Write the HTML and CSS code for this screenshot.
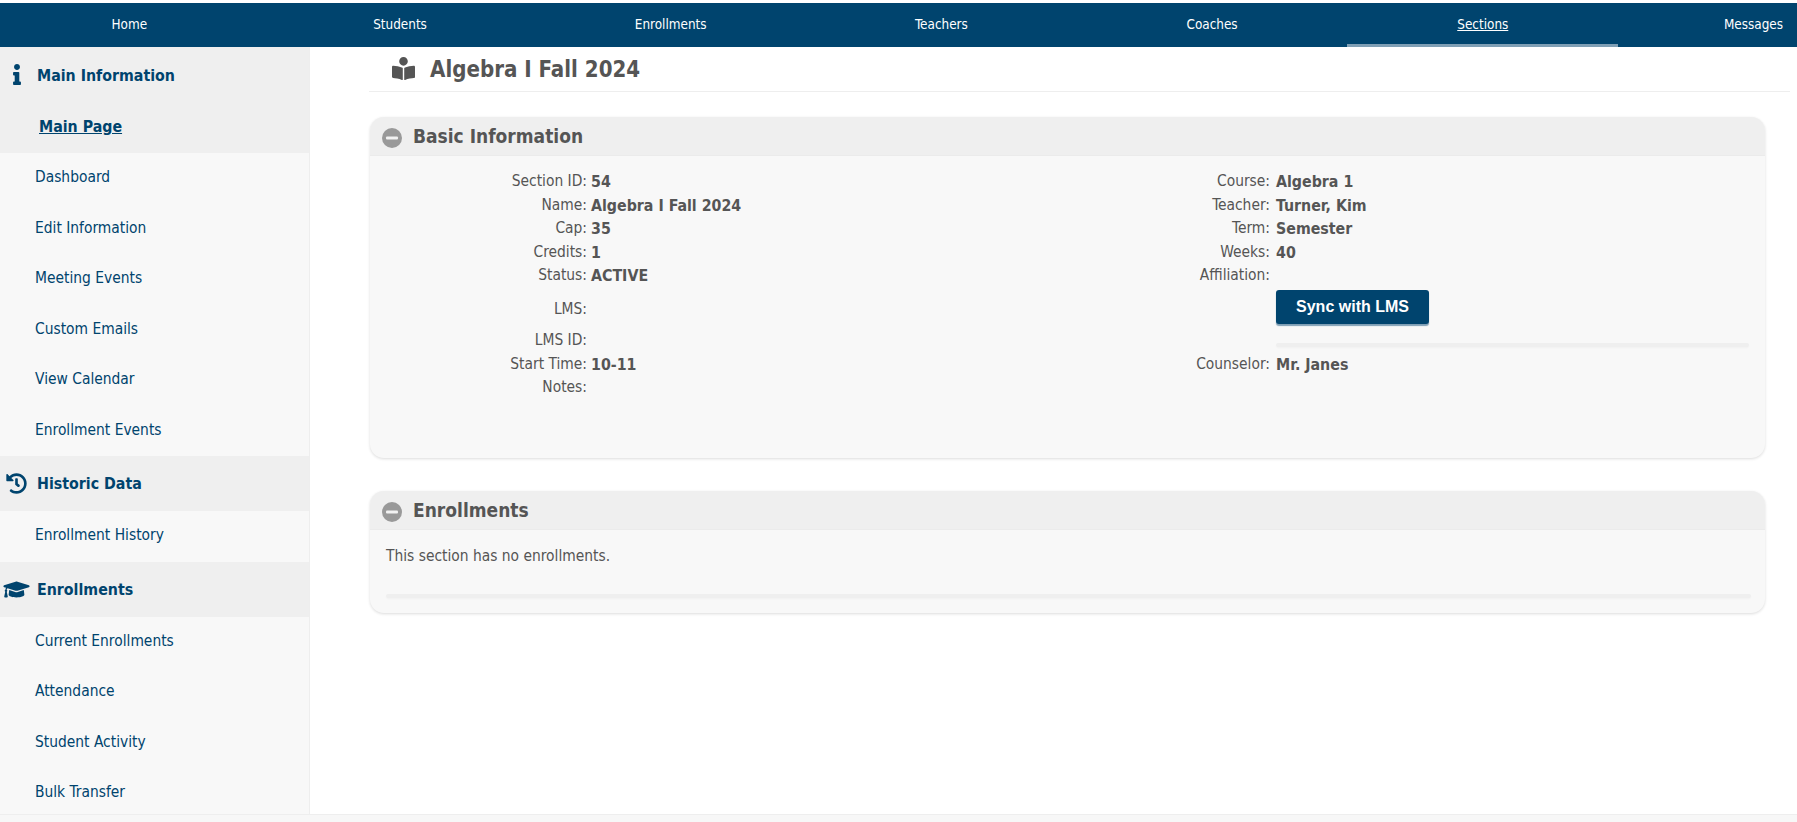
FILE: index.html
```html
<!DOCTYPE html>
<html lang="en">
<head>
<meta charset="utf-8">
<title>Algebra I Fall 2024</title>
<link rel="stylesheet" href="styles.css">
</head>
<body>
<nav class="topnav">
  <a class="tab">Home</a><a class="tab">Students</a><a class="tab">Enrollments</a><a class="tab">Teachers</a><a class="tab">Coaches</a><a class="tab active">Sections</a><a class="tab">Messages</a>
</nav>
<div class="layout">
  <aside class="sidebar">
    <div class="group-open">
      <div class="side-head"><svg class="side-icon icon-info" viewBox="0 0 192 512"><path d="M20 424.229h20V279.771H20c-11.046 0-20-8.954-20-20V212c0-11.046 8.954-20 20-20h112c11.046 0 20 8.954 20 20v212.229h20c11.046 0 20 8.954 20 20V492c0 11.046-8.954 20-20 20H20c-11.046 0-20-8.954-20-20v-47.771c0-11.046 8.954-20 20-20zM96 0C56.235 0 24 32.235 24 72s32.235 72 72 72 72-32.235 72-72S135.764 0 96 0z"/></svg><span>Main Information</span></div>
      <a class="side-current">Main Page</a>
    </div>
    <a class="side-link">Dashboard</a>
    <a class="side-link">Edit Information</a>
    <a class="side-link">Meeting Events</a>
    <a class="side-link">Custom Emails</a>
    <a class="side-link">View Calendar</a>
    <a class="side-link">Enrollment Events</a>
    <div class="side-head"><svg class="side-icon icon-history" viewBox="0 0 512 512"><path d="M504 255.531c.253 136.64-111.18 248.372-247.82 248.468-59.015.042-113.223-20.53-155.822-54.911-11.077-8.94-11.905-25.541-1.839-35.607l11.267-11.267c8.609-8.609 22.353-9.551 31.891-1.984C173.062 425.135 212.781 440 256 440c101.705 0 184-82.311 184-184 0-101.705-82.311-184-184-184-48.814 0-93.149 18.969-126.068 49.932l50.754 50.754c10.08 10.08 2.941 27.314-11.313 27.314H24c-8.837 0-16-7.163-16-16V38.627c0-14.254 17.234-21.393 27.314-11.314l49.372 49.372C129.209 34.136 189.552 8 256 8c136.81 0 247.747 110.78 248 247.531zm-180.912 78.784l9.823-12.63c8.138-10.463 6.253-25.542-4.21-33.679L288 256.349V152c0-13.255-10.745-24-24-24h-16c-13.255 0-24 10.745-24 24v135.651l65.409 50.874c10.463 8.137 25.541 6.253 33.679-4.21z"/></svg><span>Historic Data</span></div>
    <a class="side-link">Enrollment History</a>
    <div class="side-head"><svg class="side-icon icon-cap" viewBox="0 0 640 512"><path d="M622.34 153.2L343.4 67.5c-15.2-4.67-31.6-4.67-46.79 0L17.66 153.2c-23.54 7.23-23.54 38.36 0 45.59l48.63 14.94c-10.67 13.19-17.23 29.28-17.88 46.9C38.78 266.15 32 276.11 32 288c0 10.78 5.68 19.85 13.86 25.65L20.33 428.53C18.11 438.52 25.71 448 35.94 448h56.11c10.24 0 17.84-9.48 15.62-19.47L82.14 313.65C90.32 307.85 96 298.78 96 288c0-11.57-6.47-21.25-15.66-26.87.76-15.02 8.44-28.3 20.69-36.72L296.6 284.5c9.06 2.78 26.44 6.25 46.79 0l278.95-85.7c23.55-7.24 23.55-38.36 0-45.6zM352.79 315.09c-28.53 8.76-52.84 3.92-65.59 0l-145.02-44.55L128 384c0 35.35 85.96 64 192 64s192-28.65 192-64l-14.18-113.47-145.03 44.56z"/></svg><span>Enrollments</span></div>
    <a class="side-link">Current Enrollments</a>
    <a class="side-link">Attendance</a>
    <a class="side-link">Student Activity</a>
    <a class="side-link">Bulk Transfer</a>
  </aside>
  <main class="content">
    <header class="page-title">
      <svg class="title-icon" viewBox="0 0 512 512"><path d="M352 96c0-53.02-42.98-96-96-96s-96 42.98-96 96 42.98 96 96 96 96-42.98 96-96zM233.59 241.1c-59.33-36.32-155.43-46.3-203.79-49.05C13.55 191.13 0 203.51 0 219.14v222.8c0 14.33 11.59 26.28 26.49 27.05 43.66 2.29 131.99 10.68 193.04 41.43 9.37 4.72 20.48-1.71 20.48-11.87V252.56c-.01-4.67-2.32-8.95-6.42-11.46zm248.61-49.05c-48.35 2.74-144.46 12.73-203.78 49.05-4.1 2.51-6.41 6.96-6.41 11.63v245.79c0 10.19 11.14 16.63 20.54 11.9 61.04-30.72 149.32-39.11 192.97-41.4 14.9-.78 26.49-12.73 26.49-27.06V219.14c-.01-15.63-13.56-28.01-29.81-27.09z"/></svg>
      <h1>Algebra I Fall 2024</h1>
    </header>
    <section class="panel panel-basic">
      <div class="panel-head"><svg class="collapse" viewBox="0 0 20 20"><circle cx="10" cy="10" r="10"/><rect x="4" y="8.5" width="12" height="3" rx="1"/></svg><h2>Basic Information</h2></div>
      <div class="fields">
        <span class="lbl">Section ID:</span><b class="val">54</b><span class="lbl">Course:</span><b class="val">Algebra 1</b>
        <span class="lbl">Name:</span><b class="val">Algebra I Fall 2024</b><span class="lbl">Teacher:</span><b class="val">Turner, Kim</b>
        <span class="lbl">Cap:</span><b class="val">35</b><span class="lbl">Term:</span><b class="val">Semester</b>
        <span class="lbl">Credits:</span><b class="val">1</b><span class="lbl">Weeks:</span><b class="val">40</b>
        <span class="lbl">Status:</span><b class="val">ACTIVE</b><span class="lbl">Affiliation:</span><b class="val"></b>
        <span class="lbl lms">LMS:</span><b class="val"></b><span class="lbl"></span><div class="val"><button class="sync" type="button">Sync with LMS</button></div>
        <span class="lbl lms-id">LMS ID:</span><b class="val"></b><span class="lbl"></span><div class="val"><hr class="rule"></div>
        <span class="lbl">Start Time:</span><b class="val">10-11</b><span class="lbl">Counselor:</span><b class="val">Mr. Janes</b>
        <span class="lbl">Notes:</span><b class="val"></b><span class="lbl"></span><b class="val"></b>
      </div>
    </section>
    <section class="panel panel-enroll">
      <div class="panel-head"><svg class="collapse" viewBox="0 0 20 20"><circle cx="10" cy="10" r="10"/><rect x="4" y="8.5" width="12" height="3" rx="1"/></svg><h2>Enrollments</h2></div>
      <div class="panel-body">
        <p class="empty">This section has no enrollments.</p>
        <hr class="rule">
      </div>
    </section>
  </main>
</div>
<div class="footer"></div>
</body>
</html>
```
FILE: styles.css
```css
* { box-sizing: border-box; }
html, body { margin: 0; height: 100%; }
body {
  padding-top: 3px;
  background: #fff;
  color: #555;
  font-family: "DejaVu Sans Condensed", "DejaVu Sans", sans-serif;
  font-size: 15.4px;
  height: 822px;
  overflow: hidden;
}
.topnav {
  display: flex;
  height: 44px;
  background: #00446e;
  overflow: hidden;
  font-size: 13.4px;
}
.tab {
  flex: 0 0 270.7px;
  line-height: 43px;
  text-align: center;
  color: #fff;
}
.tab:first-child { margin-left: -6px; }
.tab.active {
  text-decoration: underline;
  border-bottom: 3px solid #7f9fb5;
  height: 44px;
}
.layout { display: flex; height: 767px; }
.sidebar {
  flex: 0 0 310px;
  background: #f8f8f8;
  border-right: 1px solid #eee;
  display: flex;
  flex-direction: column;
  overflow: hidden;
}
.group-open { background: #efefef; flex: 0 0 106px; }
.side-head {
  display: flex;
  align-items: center;
  height: 55px;
  flex: 0 0 55px;
  padding-left: 37px;
  position: relative;
  background: #efefef;
  color: #00446e;
  font-weight: bold;
  font-size: 15.8px;
}
.group-open .side-head span { margin-top: 2px; }
.side-icon { position: absolute; fill: #00446e; }
.icon-info { left: 13px; top: 17px; width: 8px; height: 21px; }
.icon-history { left: 6px; top: 17px; width: 21px; height: 21px; }
.icon-cap { left: 3px; top: 17px; width: 27px; height: 21px; }
.side-current {
  display: block;
  height: 51px;
  line-height: 50px;
  padding-left: 39px;
  color: #00446e;
  font-weight: bold;
  font-size: 15.8px;
  text-decoration: underline;
}
.side-link {
  display: block;
  flex: 0 0 50.5px;
  line-height: 48px;
  padding-left: 35px;
  color: #00446e;
}
.content { flex: 1; padding-right: 7px; }
.page-title {
  display: flex;
  align-items: center;
  height: 45px;
  margin-left: 59px;
  padding-left: 23px;
  border-bottom: 1px solid #eee;
}
.title-icon { width: 23px; height: 23px; margin-bottom: 2px; fill: #555; }
h1 { margin: 0 0 0 15px; font-size: 22.1px; font-weight: bold; color: #555; }
.panel {
  margin-left: 60px;
  width: 1395px;
  background: #f8f8f8;
  border-radius: 14px;
  box-shadow: 0 1px 3px rgba(0,0,0,.14);
  overflow: hidden;
}
.panel-basic { height: 341px; margin-top: 25px; }
.panel-enroll { height: 122px; margin-top: 33px; }
.panel-head {
  display: flex;
  align-items: center;
  height: 39px;
  padding-left: 12px;
  background: #efefef;
  border-bottom: 1px solid #ebebeb;
}
.collapse { width: 20px; height: 20px; margin-top: 4px; }
.collapse circle { fill: #999; }
.collapse rect { fill: #f2f2f2; }
h2 { margin: 0 0 0 11px; font-size: 19px; font-weight: bold; color: #555; }
.fields {
  display: grid;
  grid-template-columns: 217px 465px 218px 1fr;
  grid-template-rows: repeat(5, 23.5px) 39px 26px 23.5px 23.5px;
  padding-top: 14px;
  line-height: 23.5px;
}
.lbl { text-align: right; }
.val { font-weight: bold; font-size: 15.8px; min-width: 0; }
.val:nth-child(4n+2) { padding-left: 4px; }
.val:nth-child(4n) { padding-left: 6px; }
.lms { padding-top: 10px; }
.lms-id { padding-top: 2px; }
.sync {
  display: block;
  margin: 2px 0 0;
  width: 153px;
  height: 34px;
  padding: 0;
  background: #00446e;
  color: #fff;
  border: 0;
  border-radius: 3px;
  box-shadow: 0 2px 1px #7f9fb5;
  font: bold 16px/1 "Liberation Sans", sans-serif;
}
.rule {
  width: 473px;
  height: 4px;
  margin: 16px 0 0;
  border: 0;
  border-radius: 2px;
  background: #efefef;
  box-shadow: 0 1px 2px rgba(0,0,0,.03);
}
.panel-body { padding: 14px 16px 0; }
.empty { margin: 0; line-height: 24px; }
.panel-body .rule { width: 1365px; margin: 26px 0 0; }
.footer { height: 8px; background: #f7f7f7; border-top: 1px solid #eee; }
```
